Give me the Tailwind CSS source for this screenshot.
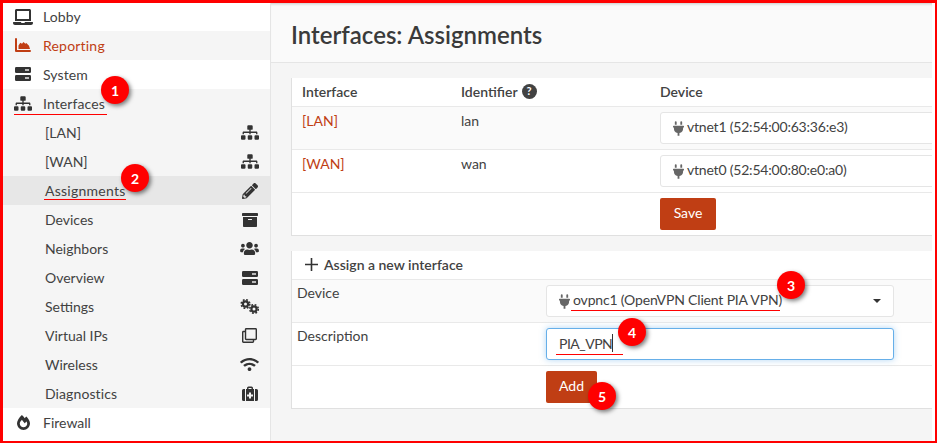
<!DOCTYPE html>
<html lang="en">
<head>
    <meta charset="UTF-8">
    <title>Interfaces: Assignments</title>
    <script src="https://cdn.jsdelivr.net/npm/@tailwindcss/browser@4"></script>
</head>
<body class="m-0 overflow-hidden bg-white">
<div class="relative w-[937px] h-[443px] overflow-hidden bg-white border-t-[3px] border-l-[3px] border-r-[2px] border-b-[2px] border-[#ff0000] flex font-['Lato',sans-serif] text-[14px] text-[#424242]">

    <!-- Sidebar -->
    <nav class="w-[268px] shrink-0 bg-white border-r border-[#e5e5e5]">
        <div class="h-[28px] flex items-center pb-[1px]">
            <svg class="ml-[10px] w-[20px] h-[16px] fill-[#333]" viewBox="0 0 640 512"><path d="M624 416H381.54c-.74 19.81-14.71 32-32.74 32H288c-18.69 0-33.02-17.47-32.77-32H16c-8.8 0-16 7.2-16 16v16c0 35.2 28.8 64 64 64h512c35.2 0 64-28.8 64-64v-16c0-8.8-7.2-16-16-16zM576 48c0-26.400-21.600-48-48-48H112C85.600 0 64 21.600 64 48v336h512V48zm-64 272H128V64h384v256z"/></svg>
            <span class="ml-[10px] tracking-[0.1px]">Lobby</span>
        </div>
        <div class="h-[29px] flex items-center bg-[#f5f5f5] text-[#c03e14] pb-[1px]">
            <svg class="ml-[12px] w-[16px] h-[14px] fill-[#c03e14]" viewBox="0 0 16 14"><path d="M0 1a1 1 0 0 1 2 0v11h13a1 1 0 0 1 0 2H1a1 1 0 0 1-1-1z"/><path d="M3.500 11V7.500l1.800-2.800 1.700 1 1.500-1.700 1.800 1.700 1-.7 2.700 2.700 1 3.300z"/></svg>
            <span class="ml-[12px] tracking-[0.2px]">Reporting</span>
        </div>
        <div class="h-[29px] flex items-center pb-[1px]">
            <svg class="ml-[12px] w-[16px] h-[14px]" viewBox="0 0 16 14"><rect y="0" width="16" height="6" rx="1.200" fill="#333"/><rect y="8" width="16" height="6" rx="1.200" fill="#333"/><rect x="10" y="2.200" width="4" height="1.600" fill="#ddd"/><rect x="10" y="10.200" width="4" height="1.600" fill="#ddd"/></svg>
            <span class="ml-[12px] tracking-[0.1px]">System</span>
        </div>
        <div class="bg-[#f5f5f5]">
            <div class="h-[29px] flex items-center">
                <svg class="ml-[11px] w-[18px] h-[15px] fill-[#333]" viewBox="0 0 640 512"><path d="M128 352H32c-17.670 0-32 14.330-32 32v96c0 17.670 14.330 32 32 32h96c17.670 0 32-14.330 32-32v-96c0-17.670-14.330-32-32-32zm-24-80h192v48h48v-48h192v48h48v-57.590c0-21.170-17.230-38.410-38.410-38.410H344v-64h40c17.670 0 32-14.330 32-32V32c0-17.670-14.330-32-32-32H256c-17.670 0-32 14.330-32 32v96c0 17.670 14.330 32 32 32h40v64H94.410C73.230 224 56 241.230 56 262.410V320h48v-48zm264 80h-96c-17.670 0-32 14.330-32 32v96c0 17.670 14.330 32 32 32h96c17.670 0 32-14.330 32-32v-96c0-17.670-14.330-32-32-32zm240 0h-96c-17.670 0-32 14.330-32 32v96c0 17.670 14.330 32 32 32h96c17.670 0 32-14.330 32-32v-96c0-17.670-14.330-32-32-32z"/></svg>
                <span class="ml-[11px] tracking-[0.1px]">Interfaces</span>
            </div>
            <div class="h-[29px] flex items-center justify-between pl-[42px] pr-[11px]">
                <span>[LAN]</span>
                <svg class="w-[18px] h-[15px] fill-[#333]" viewBox="0 0 640 512"><path d="M128 352H32c-17.670 0-32 14.330-32 32v96c0 17.670 14.330 32 32 32h96c17.670 0 32-14.330 32-32v-96c0-17.670-14.330-32-32-32zm-24-80h192v48h48v-48h192v48h48v-57.590c0-21.170-17.230-38.410-38.410-38.410H344v-64h40c17.670 0 32-14.330 32-32V32c0-17.670-14.330-32-32-32H256c-17.670 0-32 14.330-32 32v96c0 17.670 14.330 32 32 32h40v64H94.410C73.230 224 56 241.230 56 262.410V320h48v-48zm264 80h-96c-17.670 0-32 14.330-32 32v96c0 17.670 14.330 32 32 32h96c17.670 0 32-14.330 32-32v-96c0-17.670-14.330-32-32-32zm240 0h-96c-17.670 0-32 14.330-32 32v96c0 17.670 14.330 32 32 32h96c17.670 0 32-14.330 32-32v-96c0-17.670-14.330-32-32-32z"/></svg>
            </div>
            <div class="h-[29px] flex items-center justify-between pl-[42px] pr-[11px]">
                <span>[WAN]</span>
                <svg class="w-[18px] h-[15px] fill-[#333]" viewBox="0 0 640 512"><path d="M128 352H32c-17.670 0-32 14.330-32 32v96c0 17.670 14.330 32 32 32h96c17.670 0 32-14.330 32-32v-96c0-17.670-14.330-32-32-32zm-24-80h192v48h48v-48h192v48h48v-57.590c0-21.170-17.230-38.410-38.410-38.410H344v-64h40c17.670 0 32-14.330 32-32V32c0-17.670-14.330-32-32-32H256c-17.670 0-32 14.330-32 32v96c0 17.670 14.330 32 32 32h40v64H94.410C73.230 224 56 241.230 56 262.410V320h48v-48zm264 80h-96c-17.670 0-32 14.330-32 32v96c0 17.670 14.330 32 32 32h96c17.670 0 32-14.330 32-32v-96c0-17.670-14.330-32-32-32zm240 0h-96c-17.670 0-32 14.330-32 32v96c0 17.670 14.330 32 32 32h96c17.670 0 32-14.330 32-32v-96c0-17.670-14.330-32-32-32z"/></svg>
            </div>
            <div class="h-[29px] flex items-center justify-between pl-[42px] pr-[11px] bg-[#e7e7e7]">
                <span class="tracking-[0.25px]">Assignments</span>
                <svg class="w-[16px] h-[16px] mr-[1px] fill-[#333]" viewBox="0 0 512 512"><path d="M497.900 142.100l-46.100 46.100c-4.700 4.700-12.300 4.700-17 0l-111-111c-4.700-4.700-4.700-12.300 0-17l46.100-46.100c18.700-18.700 49.100-18.700 67.900 0l60.100 60.100c18.800 18.700 18.800 49.100 0 67.900zM284.200 99.800L21.600 362.400.4 483.900c-2.900 16.400 11.400 30.600 27.800 27.800l121.500-21.300 262.600-262.600c4.700-4.700 4.700-12.300 0-17l-111-111c-4.800-4.700-12.400-4.700-17.100 0zM124.100 339.900c-5.500-5.500-5.500-14.300 0-19.800l154-154c5.500-5.500 14.300-5.500 19.800 0s5.500 14.300 0 19.800l-154 154c-5.500 5.500-14.300 5.500-19.800 0zM88 424h48v36.300l-64.500 11.300-31.100-31.100L51.700 376H88v48z"/></svg>
            </div>
            <div class="h-[29px] flex items-center justify-between pl-[42px] pr-[12px]">
                <span>Devices</span>
                <svg class="w-[16px] h-[14px] fill-[#333]" viewBox="0 32 512 448"><path d="M32 448c0 17.700 14.300 32 32 32h384c17.700 0 32-14.300 32-32V160H32v288zm160-212c0-6.600 5.400-12 12-12h104c6.600 0 12 5.400 12 12v8c0 6.600-5.400 12-12 12H204c-6.600 0-12-5.400-12-12v-8zM480 32H32C14.300 32 0 46.300 0 64v48c0 8.800 7.200 16 16 16h480c8.800 0 16-7.200 16-16V64c0-17.700-14.300-32-32-32z"/></svg>
            </div>
            <div class="h-[29px] flex items-center justify-between pl-[42px] pr-[11px]">
                <span>Neighbors</span>
                <svg class="w-[19px] h-[15px] fill-[#333]" viewBox="0 0 640 512"><path d="M96 224c35.300 0 64-28.700 64-64s-28.700-64-64-64-64 28.700-64 64 28.700 64 64 64zm448 0c35.300 0 64-28.700 64-64s-28.700-64-64-64-64 28.700-64 64 28.700 64 64 64zm32 32h-64c-17.600 0-33.500 7.100-45.100 18.600 40.300 22.100 68.900 62 75.100 109.400h66c17.700 0 32-14.300 32-32v-32c0-35.300-28.700-64-64-64zm-256 0c61.900 0 112-50.100 112-112S381.900 32 320 32 208 82.100 208 144s50.100 112 112 112zm76.800 32h-8.300c-20.800 10-43.900 16-68.500 16s-47.600-6-68.500-16h-8.300C179.600 288 128 339.600 128 403.200V432c0 26.500 21.500 48 48 48h288c26.500 0 48-21.500 48-48v-28.800c0-63.600-51.600-115.200-115.200-115.200zm-223.700-13.400C161.500 263.100 145.600 256 128 256H64c-35.300 0-64 28.700-64 64v32c0 17.700 14.300 32 32 32h65.900c6.300-47.400 34.900-87.300 75.200-109.400z"/></svg>
            </div>
            <div class="h-[29px] flex items-center justify-between pl-[42px] pr-[12px]">
                <span>Overview</span>
                <svg class="w-[16px] h-[14px]" viewBox="0 0 16 14"><rect y="0" width="16" height="6" rx="1.200" fill="#333"/><rect y="8" width="16" height="6" rx="1.200" fill="#333"/><rect x="10" y="2.200" width="4" height="1.600" fill="#ddd"/><rect x="10" y="10.200" width="4" height="1.600" fill="#ddd"/></svg>
            </div>
            <div class="h-[29px] flex items-center justify-between pl-[42px] pr-[11px]">
                <span>Settings</span>
                <svg class="w-[19px] h-[15px]" viewBox="0 0 19 15" fill="none" stroke="#333"><circle cx="5.500" cy="5" r="2.600" stroke-width="2.200"/><circle cx="5.500" cy="5" r="4.300" stroke-width="1.600" stroke-dasharray="1.800 1.600"/><circle cx="14" cy="10" r="2.600" stroke-width="2.200"/><circle cx="14" cy="10" r="4.300" stroke-width="1.600" stroke-dasharray="1.800 1.600"/></svg>
            </div>
            <div class="h-[29px] flex items-center justify-between pl-[42px] pr-[12px]">
                <span>Virtual IPs</span>
                <svg class="w-[15px] h-[15px] mr-[1px] fill-[#333]" viewBox="0 0 512 512"><path d="M464 0H144c-26.510 0-48 21.490-48 48v48H48c-26.510 0-48 21.490-48 48v320c0 26.510 21.490 48 48 48h320c26.510 0 48-21.490 48-48v-48h48c26.510 0 48-21.490 48-48V48c0-26.510-21.490-48-48-48zM362 464H54a6 6 0 0 1-6-6V150a6 6 0 0 1 6-6h42v224c0 26.510 21.490 48 48 48h224v42a6 6 0 0 1-6 6zm96-96H150a6 6 0 0 1-6-6V54a6 6 0 0 1 6-6h308a6 6 0 0 1 6 6v308a6 6 0 0 1-6 6z"/></svg>
            </div>
            <div class="h-[29px] flex items-center justify-between pl-[42px] pr-[11px]">
                <span>Wireless</span>
                <svg class="w-[19px] h-[15px] fill-[#333]" viewBox="0 0 640 512"><path d="M634.910 154.880C457.740-8.990 182.190-8.930 5.090 154.880c-6.660 6.160-6.790 16.590-.35 22.980l34.240 33.970c6.140 6.100 16.020 6.230 22.400.38 145.920-133.680 371.300-133.710 517.250 0 6.380 5.850 16.260 5.710 22.400-.38l34.240-33.970c6.430-6.390 6.300-16.820-.36-22.980zM320 352c-35.350 0-64 28.650-64 64s28.650 64 64 64 64-28.650 64-64-28.650-64-64-64zm202.670-83.590c-115.260-101.930-290.210-101.820-405.340 0-6.900 6.100-7.120 16.690-.57 23.150l34.440 33.990c6 5.920 15.660 6.320 22.050.8 83.950-72.570 209.740-72.410 293.490 0 6.390 5.520 16.050 5.130 22.050-.8l34.440-33.990c6.560-6.460 6.330-17.060-.56-23.150z"/></svg>
            </div>
            <div class="h-[29px] flex items-center justify-between pl-[42px] pr-[12px]">
                <span class="tracking-[0.1px]">Diagnostics</span>
                <svg class="w-[16px] h-[15px]" viewBox="0 0 16 15"><path d="M5 3V2a1.500 1.500 0 0 1 1.500-1.500h3A1.500 1.500 0 0 1 11 2v1h3.500A1.500 1.500 0 0 1 16 4.500v9a1.500 1.500 0 0 1-1.500 1.500h-13A1.500 1.500 0 0 1 0 13.500v-9A1.500 1.500 0 0 1 1.500 3zM6.500 2v1h3V2z" fill="#333" fill-rule="evenodd"/><rect x="3" y="3" width="1" height="12" fill="#f5f5f5"/><rect x="12" y="3" width="1" height="12" fill="#f5f5f5"/><path d="M7 6.500h2v2h2v2H9v2H7v-2H5v-2h2z" fill="#f5f5f5"/></svg>
            </div>
        </div>
        <div class="h-[29px] flex items-center">
            <svg class="ml-[14px] w-[13px] h-[15px] fill-[#333]" viewBox="0 0 448 512"><path d="M323.560 51.200c-20.800 19.300-39.580 39.590-56.220 59.970C240.080 73.620 206.280 35.530 168 0 69.740 91.170 0 209.960 0 281.600 0 408.850 100.290 512 224 512s224-103.150 224-230.400c0-53.270-51.980-163.140-124.440-230.400zm-19.470 340.650C282.430 407.010 255.720 416 226.860 416 154.710 416 96 368.260 96 290.750c0-38.610 24.310-72.630 72.790-130.750 6.930 7.980 98.830 125.340 98.830 125.340l58.630-66.880c4.140 6.850 7.910 13.550 11.270 19.970 27.350 52.190 15.810 118.970-33.430 153.420z"/></svg>
            <span class="ml-[13px]">Firewall</span>
        </div>
    </nav>

    <!-- Main -->
    <main class="w-[661px] shrink-0 bg-[#f5f5f5]">
        <header class="h-[60px] flex items-center pl-[20px] pt-[4px] bg-[#fafafa] border-b border-[#e5e5e5] shadow-[inset_0_3px_3px_-2px_rgba(0,0,0,0.2)]">
            <h1 class="text-[24px] font-semibold text-[#3a3a3a]">Interfaces: Assignments</h1>
        </header>

        <!-- Assignments table -->
        <section class="mt-[15px] ml-[20px] bg-white border-l border-b border-[#e0e0e0] overflow-hidden">
            <div class="h-[29px] grid grid-cols-[159px_199px_1fr] items-center pl-[10px] pb-[1px] border-b border-[#e9e9e9] font-semibold">
                <span>Interface</span>
                <span class="flex items-center gap-[4px]">Identifier <span class="w-[15px] h-[15px] rounded-full bg-[#424242] text-white text-[11px] font-bold flex items-center justify-center">?</span></span>
                <span>Device</span>
            </div>
            <div class="h-[43px] grid grid-cols-[159px_199px_1fr] pl-[10px] pt-[5px] bg-[#fafafa] border-b border-[#e9e9e9]">
                <a class="-mt-[2px] text-[#c03e14]">[LAN]</a>
                <span class="-mt-[2px]">lan</span>
                <div class="h-[32px] w-[300px] flex items-center pl-[12px] pb-[3px] gap-[3px] bg-white border border-[#e5e5e5] rounded-[3px] tracking-[-0.2px]">
                    <svg class="mt-[3px] w-[11px] h-[15px] fill-[#666]" viewBox="0 0 384 512"><path d="M320,32a32,32,0,0,0-64,0v96h64Zm48,128H16A16,16,0,0,0,0,176v32a16,16,0,0,0,16,16H32v32A160.070,160.070,0,0,0,160,412.800V512h64V412.800A160.070,160.070,0,0,0,352,256V224h16a16,16,0,0,0,16-16V176A16,16,0,0,0,368,160ZM128,32a32,32,0,0,0-64,0v96h64Z"/></svg>
                    <span>vtnet1 (52:54:00:63:36:e3)</span>
                </div>
            </div>
            <div class="h-[43px] grid grid-cols-[159px_199px_1fr] pl-[10px] pt-[5px] border-b border-[#e9e9e9]">
                <a class="-mt-[2px] text-[#c03e14]">[WAN]</a>
                <span class="-mt-[2px]">wan</span>
                <div class="h-[32px] w-[300px] flex items-center pl-[12px] pb-[3px] gap-[3px] bg-white border border-[#e5e5e5] rounded-[3px] tracking-[-0.2px]">
                    <svg class="mt-[3px] w-[11px] h-[15px] fill-[#666]" viewBox="0 0 384 512"><path d="M320,32a32,32,0,0,0-64,0v96h64Zm48,128H16A16,16,0,0,0,0,176v32a16,16,0,0,0,16,16H32v32A160.070,160.070,0,0,0,160,412.800V512h64V412.800A160.070,160.070,0,0,0,352,256V224h16a16,16,0,0,0,16-16V176A16,16,0,0,0,368,160ZM128,32a32,32,0,0,0-64,0v96h64Z"/></svg>
                    <span>vtnet0 (52:54:00:80:e0:a0)</span>
                </div>
            </div>
            <div class="h-[42px] pl-[368px] pt-[5px]">
                <button class="w-[56px] h-[32px] pb-[3px] bg-[#c03e14] text-white rounded-[2px]">Save</button>
            </div>
        </section>

        <!-- New assignment -->
        <section class="mt-[15px] ml-[20px] bg-white border-l border-b border-[#e0e0e0]">
            <div class="h-[29px] flex items-center pl-[13px] pb-[1px] gap-[6px] border-b border-[#e9e9e9] font-semibold">
                <svg class="w-[13px] h-[13px] stroke-[#333]" viewBox="0 0 13 13" stroke-width="1.600"><path d="M6.500 0v13M0 6.500h13"/></svg>
                <span>Assign a new interface</span>
            </div>
            <div class="h-[43px] grid grid-cols-[249px_348px] pl-[5px] pt-[5px] bg-[#fafafa] border-b border-[#e9e9e9]">
                <span class="-mt-[3px]">Device</span>
                <div class="h-[32px] flex items-center pl-[12px] pb-[3px] gap-[3px] bg-white border border-[#e5e5e5] rounded-[3px]">
                    <svg class="mt-[3px] w-[11px] h-[15px] fill-[#666]" viewBox="0 0 384 512"><path d="M320,32a32,32,0,0,0-64,0v96h64Zm48,128H16A16,16,0,0,0,0,176v32a16,16,0,0,0,16,16H32v32A160.070,160.070,0,0,0,160,412.800V512h64V412.800A160.070,160.070,0,0,0,352,256V224h16a16,16,0,0,0,16-16V176A16,16,0,0,0,368,160ZM128,32a32,32,0,0,0-64,0v96h64Z"/></svg>
                    <span class="tracking-[-0.17px]">ovpnc1 (OpenVPN Client PIA VPN)</span>
                    <span class="ml-auto mr-[12px] mt-[3px] w-0 h-0 border-x-[4px] border-x-transparent border-t-[4px] border-t-[#333]"></span>
                </div>
            </div>
            <div class="h-[43px] grid grid-cols-[249px_348px] pl-[5px] pt-[5px] border-b border-[#e9e9e9]">
                <span class="-mt-[3px]">Description</span>
                <div class="h-[32px] flex items-center pl-[12px] pb-[2px] bg-white border border-[#66afe9] rounded-[3px] shadow-[0_0_6px_rgba(102,175,233,0.5)]">
                    <span class="tracking-[-0.5px]">PIA_VPN</span><span class="w-px h-[18px] bg-[#333]"></span>
                </div>
            </div>
            <div class="h-[42px] pl-[254px] pt-[5px]">
                <button class="w-[51px] h-[32px] pb-[3px] bg-[#c03e14] text-white rounded-[2px]">Add</button>
            </div>
        </section>
    </main>

    <!-- Annotations drawn on top of the screenshot -->
    <div class="absolute left-[11px] top-[111px] w-[93px] h-px bg-[#ff0000]"></div>
    <div class="absolute left-[41px] top-[196px] w-[82px] h-px bg-[#ff0000]"></div>
    <div class="absolute left-[568px] top-[307px] w-[209px] h-px bg-[#ff0000]"></div>
    <div class="absolute left-[553px] top-[351px] w-[67px] h-px bg-[#ff0000]"></div>
    <div class="absolute left-[98px] top-[73px] w-[28px] h-[28px] rounded-full bg-[#ff0000] text-white font-bold text-[14px] flex items-center justify-center shadow-[2px_2px_4px_rgba(0,0,0,0.5)]">1</div>
    <div class="absolute left-[118px] top-[161px] w-[28px] h-[28px] rounded-full bg-[#ff0000] text-white font-bold text-[14px] flex items-center justify-center shadow-[2px_2px_4px_rgba(0,0,0,0.5)]">2</div>
    <div class="absolute left-[774px] top-[268px] w-[28px] h-[28px] rounded-full bg-[#ff0000] text-white font-bold text-[14px] flex items-center justify-center shadow-[2px_2px_4px_rgba(0,0,0,0.5)]">3</div>
    <div class="absolute left-[615px] top-[315px] w-[28px] h-[28px] rounded-full bg-[#ff0000] text-white font-bold text-[14px] flex items-center justify-center shadow-[2px_2px_4px_rgba(0,0,0,0.5)]">4</div>
    <div class="absolute left-[585px] top-[379px] w-[28px] h-[28px] rounded-full bg-[#ff0000] text-white font-bold text-[14px] flex items-center justify-center shadow-[2px_2px_4px_rgba(0,0,0,0.5)]">5</div>
</div>
</body>
</html>
